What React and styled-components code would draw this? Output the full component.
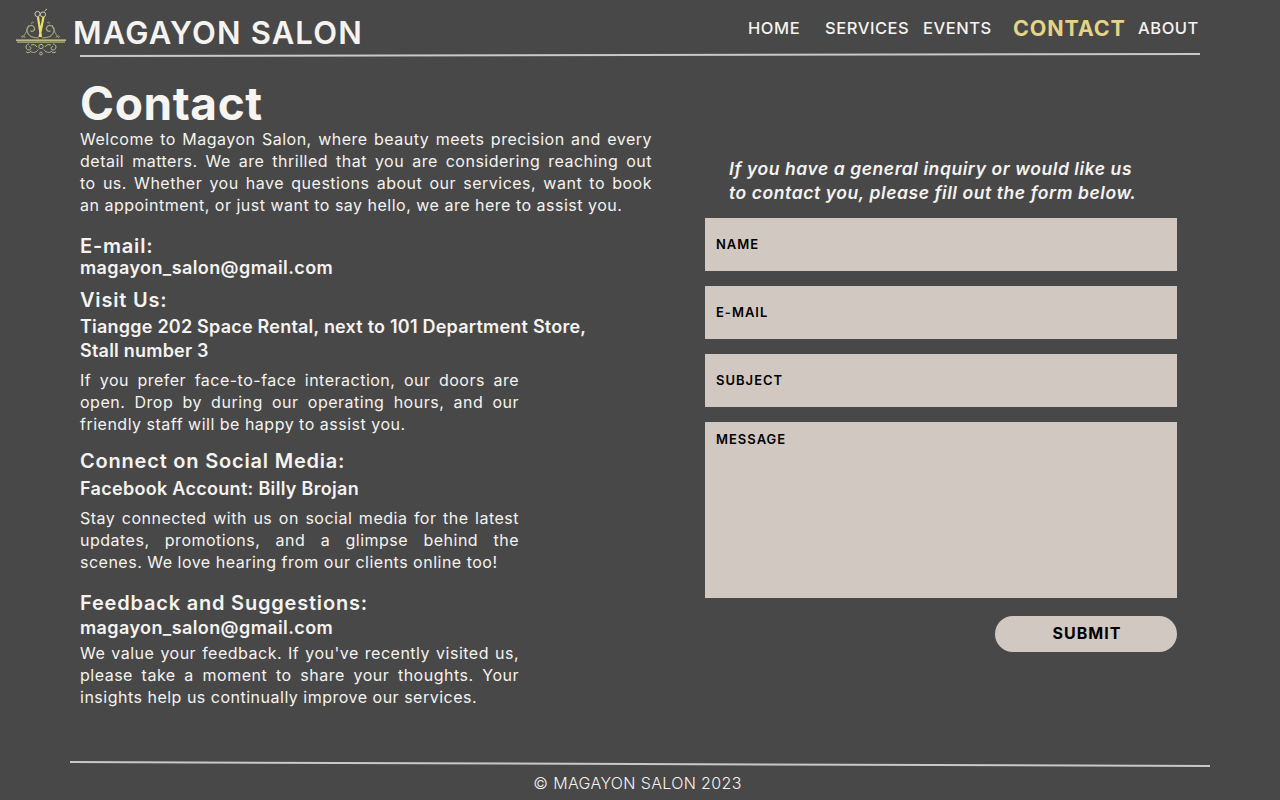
import React from 'react';
import styled, { createGlobalStyle } from 'styled-components';

const GlobalStyle = createGlobalStyle`
  html, body {
    margin: 0;
    padding: 0;
    background: #484848;
  }
  * {
    box-sizing: border-box;
  }
`;

const Page = styled.div`
  width: 1280px;
  height: 800px;
  overflow: hidden;
  background: #484848;
  color: #f5f3f0;
  font-family: Inter, 'Open Sans', sans-serif;
`;

const Header = styled.header`
  display: flex;
  align-items: flex-start;
  height: 54px;
  padding: 8px 0 0 16px;
`;

const Logo = styled.svg`
  flex: none;
  width: 50px;
  height: 48px;
`;

const Brand = styled.div`
  margin-left: 7px;
  margin-top: 4px;
  width: 640px;
  font-size: 31px;
  line-height: 42px;
  font-weight: 600;
  letter-spacing: 1.15px;
  white-space: nowrap;
`;

const Nav = styled.nav`
  display: flex;
  margin-left: 35px;
  margin-top: 8px;
`;

const NavLink = styled.a`
  display: block;
  width: ${(p) => p.$w}px;
  margin-right: ${(p) => p.$gap || 0}px;
  font-size: ${(p) => (p.$active ? 21.5 : 16.5)}px;
  line-height: 24px;
  font-weight: ${(p) => (p.$active ? 700 : 500)};
  letter-spacing: ${(p) => (p.$active ? 0.85 : 0.55)}px;
  color: ${(p) => (p.$active ? '#e4d484' : '#f5f3f0')};
  white-space: nowrap;
`;

const Rule = styled.div`
  height: 1.5px;
  width: ${(p) => p.$w}px;
  margin-left: ${(p) => p.$x}px;
  background: #c9c9c9;
  transform: rotate(${(p) => p.$tilt}deg);
`;

const Main = styled.main`
  display: grid;
  grid-template-columns: 572px 472px;
  column-gap: 53px;
  padding-left: 80px;
`;

const Left = styled.section`
  display: flex;
  flex-direction: column;
`;

const Title = styled.h1`
  margin: 22px 0 0;
  font-size: 46px;
  line-height: 50px;
  font-weight: 700;
  letter-spacing: 0.6px;
  color: #f7f5f2;
`;

const Para = styled.p`
  margin: ${(p) => p.$top || 0}px 0 0;
  width: ${(p) => p.$w || 439}px;
  font-size: 16px;
  line-height: 22px;
  font-weight: 400;
  letter-spacing: 0.5px;
  text-align: justify;
`;

const Heading = styled.h2`
  margin: ${(p) => p.$top || 0}px 0 0;
  font-size: 20px;
  line-height: 24px;
  font-weight: 600;
  letter-spacing: 0.8px;
`;

const Detail = styled.div`
  margin: ${(p) => p.$top || 0}px 0 0;
  font-size: 18px;
  line-height: ${(p) => p.$lh || 24}px;
  font-weight: 600;
  letter-spacing: ${(p) => p.$ls || 0.4}px;
`;

const Right = styled.section`
  display: flex;
  flex-direction: column;
  padding-top: 101px;
`;

const Lead = styled.p`
  margin: 0 0 13px 24px;
  font-size: 17.5px;
  line-height: 24px;
  font-weight: 600;
  font-style: italic;
  letter-spacing: 0.57px;
  white-space: nowrap;
`;

const Form = styled.form`
  display: flex;
  flex-direction: column;
  gap: 15px;
`;

const Field = styled.input`
  display: block;
  width: 100%;
  height: 53px;
  padding: 0 11px 1px;
  border: none;
  outline: 0;
  border-radius: 0;
  background: #d2c8c2;
  color: #000;
  font-family: inherit;
  font-size: 13px;
  font-weight: 600;
  letter-spacing: 1px;
  &::placeholder {
    color: #000;
    opacity: 1;
  }
`;

const Message = styled(Field).attrs({ as: 'textarea' })`
  height: 176px;
  padding: 9px 11px;
  resize: none;
`;

const Submit = styled.button`
  align-self: flex-end;
  width: 182px;
  height: 36px;
  margin-top: 3px;
  padding: 0 0 1px 2px;
  border: none;
  border-radius: 18px;
  background: #d2c8c2;
  color: #000;
  font-family: inherit;
  font-size: 16px;
  font-weight: 700;
  letter-spacing: 1px;
`;

const FooterRule = styled(Rule)`
  margin-top: 55px;
`;

const Footer = styled.footer`
  margin-top: 8px;
  text-align: center;
  padding-right: 5px;
  font-size: 16px;
  line-height: 22px;
  font-weight: 300;
  letter-spacing: 0.35px;
`;

function SalonLogo() {
  return (
    <Logo viewBox="0 0 50 48" fill="none">
      <g stroke="#cfcbb0" strokeWidth="1">
        <circle cx="21.5" cy="6" r="2.6" />
        <circle cx="27" cy="6.5" r="2.6" />
        <path d="M28.5 3 L31 1" />
      </g>
      <path d="M22 9 L25 29 M27.5 9 L23.5 29" stroke="#e8df66" strokeWidth="2.2" />
      <g stroke="#a8a67e" strokeWidth="1.2">
        <path d="M23 30 C17 30 12 28 11 23 C10 18 16 16 18 19 C20 22 16 25 14.5 22.5" />
        <path d="M26 30 C32 30 37 28 38 23 C39 18 33 16 31 19 C29 22 33 25 34.5 22.5" />
        <path d="M6 30 C9 27 10 25 13 17 M43 30 C40 27 39 25 36 17" strokeWidth="0.9" />
        <path d="M18 15 C16 13 15 15 16 16 M31 15 C33 13 34 15 33 16" strokeWidth="0.9" />
        <path d="M5 29 C7 27 9 28 9 30 M44 29 C42 27 40 28 40 30" strokeWidth="0.9" />
      </g>
      <rect x="0" y="31.5" width="50" height="1.3" fill="#d8d490" />
      <rect x="1" y="33.4" width="48" height="1.3" fill="#b3b07e" />
      <g stroke="#b9b794" strokeWidth="1">
        <path d="M13 36 C9 36 9 42 13 42 C15.5 42 15.5 38.5 13 38.5" />
        <path d="M37 36 C41 36 41 42 37 42 C34.5 42 34.5 38.5 37 38.5" />
        <path d="M15 37 C18 36 20 37 21 39 M35 37 C32 36 30 37 29 39" />
        <circle cx="25" cy="38.5" r="2.2" />
        <path d="M14 43 C17 45.5 20 44.5 22.5 41.5 M36 43 C33 45.5 30 44.5 27.5 41.5" />
        <circle cx="25" cy="45.5" r="1.4" />
        <path d="M10 43.5 C11 45 13 45 14 44 M40 43.5 C39 45 37 45 36 44" />
      </g>
    </Logo>
  );
}

export default function App() {
  return (
    <Page>
      <GlobalStyle />
      <Header>
        <SalonLogo />
        <Brand>MAGAYON SALON</Brand>
        <Nav>
          <NavLink $w={53} $gap={24}>HOME</NavLink>
          <NavLink $w={84} $gap={14}>SERVICES</NavLink>
          <NavLink $w={67} $gap={23}>EVENTS</NavLink>
          <NavLink $w={112} $gap={13} $active>CONTACT</NavLink>
          <NavLink $w={62}>ABOUT</NavLink>
        </Nav>
      </Header>
      <Rule $x={80} $w={1120} $tilt={-0.1} />
      <Main>
        <Left>
          <Title>Contact</Title>
          <Para $w={572}>
            Welcome to Magayon Salon, where beauty meets precision and every detail matters. We are
            thrilled that you are considering reaching out to&nbsp;us. Whether you have questions about
            our services, want to book an appointment, or just want to say hello, we are here to
            assist you.
          </Para>
          <Heading $top={18}>E-mail:</Heading>
          <Detail $lh={20}>magayon_salon@gmail.com</Detail>
          <Heading $top={10}>Visit Us:</Heading>
          <Detail $top={3} $ls={0.22}>
            Tiangge 202 Space Rental, next to 101 Department Store,
            <br />
            Stall number 3
          </Detail>
          <Para $top={6}>
            If you prefer face-to-face interaction, our doors are open. Drop by during our operating
            hours, and our friendly staff will be happy to assist you.
          </Para>
          <Heading $top={14}>Connect on Social Media:</Heading>
          <Detail $top={4} $ls={0.3}>Facebook Account: Billy Brojan</Detail>
          <Para $top={6}>
            Stay connected with us on social media for the latest updates, promotions, and a glimpse
            behind the scenes. We love hearing from our clients online too!
          </Para>
          <Heading $top={18}>Feedback and Suggestions:</Heading>
          <Detail $top={1}>magayon_salon@gmail.com</Detail>
          <Para $top={2}>
            We value your feedback. If you've recently visited us, please take a moment to share your
            thoughts. Your insights help us continually improve our services.
          </Para>
        </Left>
        <Right>
          <Lead>
            If you have a general inquiry or would like us
            <br />
            to contact you, please fill out the form below.
          </Lead>
          <Form onSubmit={(e) => e.preventDefault()}>
            <Field type="text" placeholder="NAME" />
            <Field type="text" placeholder="E-MAIL" />
            <Field type="text" placeholder="SUBJECT" />
            <Message placeholder="MESSAGE" />
            <Submit type="submit">SUBMIT</Submit>
          </Form>
        </Right>
      </Main>
      <FooterRule $x={70} $w={1140} $tilt={0.2} />
      <Footer>© MAGAYON SALON 2023</Footer>
    </Page>
  );
}
